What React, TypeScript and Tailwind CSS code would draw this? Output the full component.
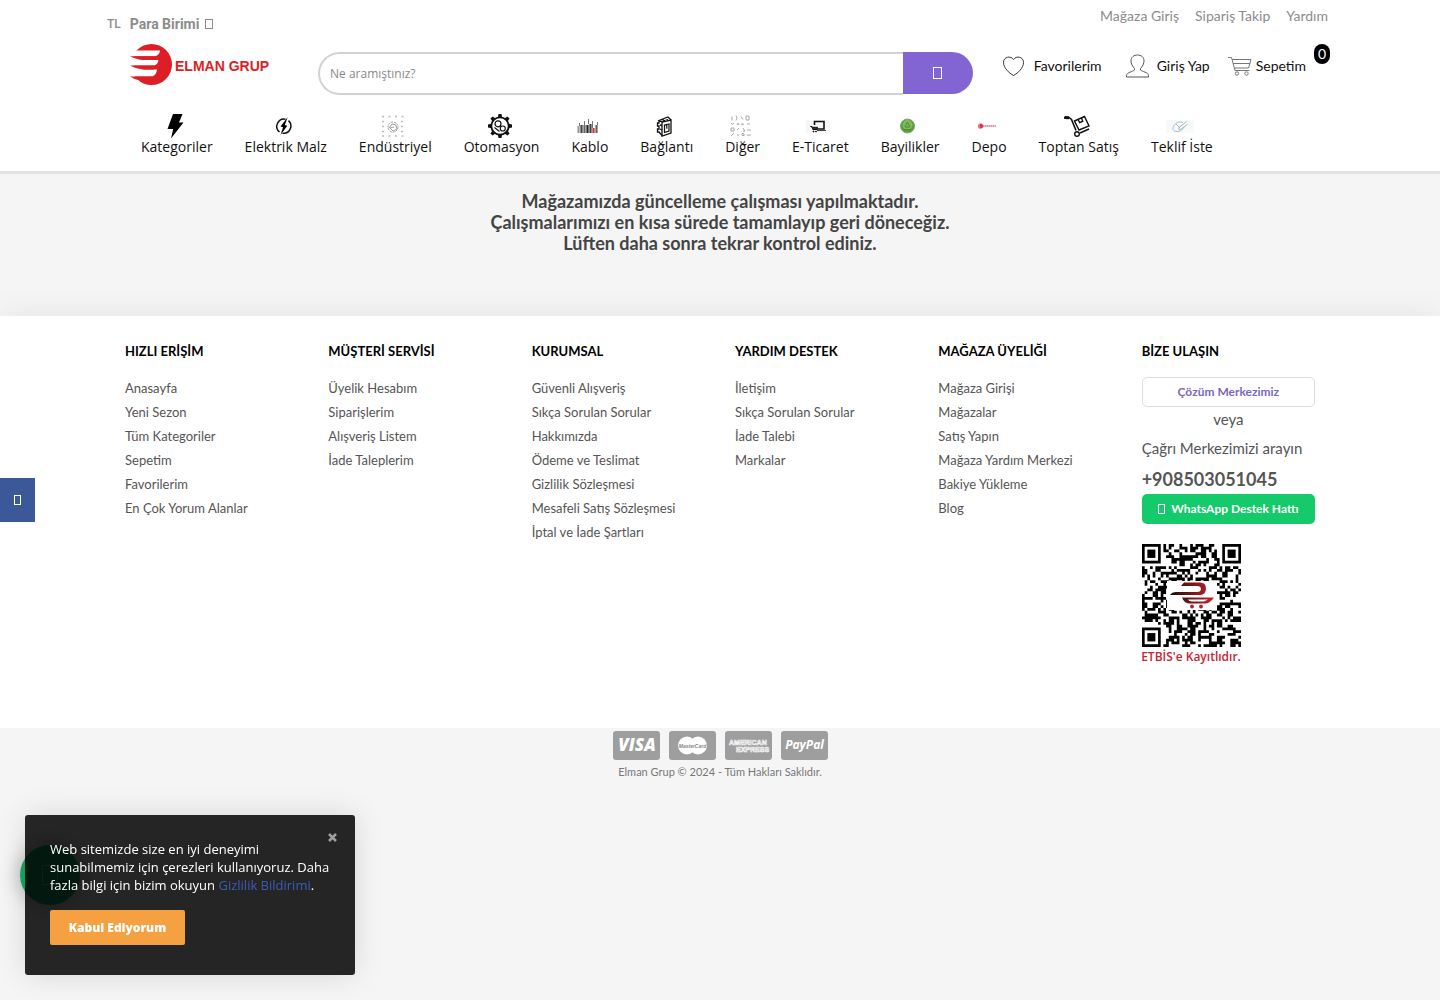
import type { ReactNode } from "react";

const columns = [
  {
    title: "HIZLI ERİŞİM",
    links: ["Anasayfa", "Yeni Sezon", "Tüm Kategoriler", "Sepetim", "Favorilerim", "En Çok Yorum Alanlar"],
  },
  {
    title: "MÜŞTERİ SERVİSİ",
    links: ["Üyelik Hesabım", "Siparişlerim", "Alışveriş Listem", "İade Taleplerim"],
  },
  {
    title: "KURUMSAL",
    links: [
      "Güvenli Alışveriş",
      "Sıkça Sorulan Sorular",
      "Hakkımızda",
      "Ödeme ve Teslimat",
      "Gizlilik Sözleşmesi",
      "Mesafeli Satış Sözleşmesi",
      "İptal ve İade Şartları",
    ],
  },
  {
    title: "YARDIM DESTEK",
    links: ["İletişim", "Sıkça Sorulan Sorular", "İade Talebi", "Markalar"],
  },
  {
    title: "MAĞAZA ÜYELİĞİ",
    links: ["Mağaza Girişi", "Mağazalar", "Satış Yapın", "Mağaza Yardım Merkezi", "Bakiye Yükleme", "Blog"],
  },
];

function Svg({ children, w = 24 }: { children: ReactNode; w?: number }) {
  return (
    <svg width={w} height={24} viewBox={`0 0 ${w} 24`} fill="none" stroke="#111" aria-hidden="true">
      {children}
    </svg>
  );
}

const toothAngles = [0, 45, 90, 135, 180, 225, 270, 315];

const menu = [
  {
    label: "Kategoriler",
    icon: (
      <Svg>
        <path d="M10 0h9.500l-3.500 8.500h4.500L8 24.500l2.200-9.500H4.500z" fill="#000" stroke="none" />
      </Svg>
    ),
  },
  {
    label: "Elektrik Malz",
    icon: (
      <Svg>
        <path d="M13.500 5.200A7.300 7.300 0 0 0 7.500 18M10.500 19.200A7.300 7.300 0 0 0 16.500 6.600" strokeWidth="1.500" />
        <path d="M15.800 3L8.500 12.500l2.500 .8L8.500 21l6.800-9.200-2.500-.8z" fill="#000" stroke="none" />
      </Svg>
    ),
  },
  {
    label: "Endüstriyel",
    icon: (
      <Svg>
        <g stroke="#bbb" strokeWidth="1.500" strokeDasharray="2 4.500">
          <path d="M1 2.500h22M1 7.500h3M20 7.500h3M1 12.500h3M20 12.500h3M1 17.500h3M20 17.500h3M1 22h22" />
        </g>
        <circle cx="12" cy="13" r="5" stroke="#999" strokeDasharray="2 1" />
        <path d="M8 14l3-4 4 1 1 4-4 2-3-3 4-1" stroke="#888" strokeWidth=".8" />
      </Svg>
    ),
  },
  {
    label: "Otomasyon",
    icon: (
      <Svg>
        {toothAngles.map((a) => (
          <path key={a} d="M9.800 3.500L10.500 0h3l.7 3.500z" fill="#111" stroke="none" transform={`rotate(${a} 12 12)`} />
        ))}
        <circle cx="12" cy="12" r="8.700" strokeWidth="1.800" />
        <circle cx="10" cy="9.800" r="3" strokeWidth="1.200" />
        <circle cx="14.800" cy="14.500" r="2.500" strokeWidth="1.200" />
        <path d="M6.500 13.500l5 4" strokeWidth="1.200" />
      </Svg>
    ),
  },
  {
    label: "Kablo",
    icon: (
      <Svg>
        <g strokeWidth="2.200">
          <path d="M2.500 12v7" stroke="#999" />
          <path d="M5.500 11v8M14.500 10v9" stroke="#444" />
          <path d="M8.500 11v8M20.500 11v8" stroke="#666" />
          <path d="M11.500 11v8" stroke="#223" />
          <path d="M17.500 14v5" stroke="#c33" />
        </g>
        <path d="M3.500 9v3M8.500 7v4M12.500 5v5M16.500 7v7M21.500 8v3" stroke="#777" strokeWidth="1" />
      </Svg>
    ),
  },
  {
    label: "Bağlantı",
    icon: (
      <Svg>
        <path d="M9 8l9-2v13l-9 3z" strokeWidth="1.300" />
        <path d="M11.500 11l4.500-1v7l-4.500 1.500zM13.800 10.800v4" strokeWidth="1.200" />
        <path d="M9 8L6 6.500l9-3.500 3 3M6 6.500V9H4.500v3H6v3H4.500v3H6l3 3.500M7 11l2 .5M7 15l2 1M9 5.500l3 1.300M12 4.300l3 1.200" strokeWidth="1.300" />
      </Svg>
    ),
  },
  {
    label: "Diğer",
    icon: (
      <Svg>
        <g stroke="#aaa" strokeWidth="1">
          <path d="M3 2.500v4M7 1.500q2 2 0 5M12 2.500l2 3M17 2h3v4h-3z" />
          <path d="M2 9q1 3 3 0M8 11l1-2 1 2M13 9v2l2-1M18 10h3" />
          <path d="M2 14h3v3H2zM8 16l2-2M14 14l2 3-2 0M18 16h4" />
          <path d="M2 22l3-3M8 21h2M13 19.500h2v2h-2zM18 21h4" />
        </g>
      </Svg>
    ),
  },
  {
    label: "E-Ticaret",
    icon: (
      <Svg>
        <rect x="0" y="6" width="24" height="13" fill="#f6f6f6" stroke="none" />
        <path d="M8.500 11V7.500h9.500V15h-8" strokeWidth="1.600" />
        <path d="M4.500 12.500h1.500l.8 3h4l.8-2.200H6.500z" fill="#333" strokeWidth="1" />
        <path d="M11 16.500h9" stroke="#444" />
        <circle cx="7.500" cy="17.500" r=".5" fill="#111" />
        <circle cx="10" cy="17.500" r=".5" fill="#111" />
      </Svg>
    ),
  },
  {
    label: "Bayilikler",
    icon: (
      <Svg>
        <circle cx="11.500" cy="12" r="7" fill="#5d9a42" stroke="#7fae68" />
        <circle cx="11.500" cy="11" r="4.500" fill="#7dba5c" stroke="#8fc074" strokeWidth=".8" />
        <path d="M9 13l2.500-5 2.500 5zM8 15.500h7" stroke="#4c8535" strokeWidth=".9" />
      </Svg>
    ),
  },
  {
    label: "Depo",
    icon: (
      <Svg>
        <circle cx="5.500" cy="12" r="2.600" fill="#dd3450" stroke="none" />
        <path d="M2 11h3M2 13h3" stroke="#fff" strokeWidth=".6" />
        <path d="M8 12h13" stroke="#dd7085" strokeWidth="1.300" strokeDasharray="1.500 .4" />
      </Svg>
    ),
  },
  {
    label: "Toptan Satış",
    icon: (
      <Svg w={28}>
        <path d="M1 4l5-.5 2.500 2 4.500 11" strokeWidth="1.600" />
        <path d="M1.500 3.500l4.500.3" strokeWidth="3" />
        <circle cx="14" cy="20" r="2.300" strokeWidth="1.400" />
        <path d="M17 19l9-4M11.500 7l10-4.500L26 12l-10 4zM15 5.500l1.700 3 3-1.200-1.200-3.300" strokeWidth="1.400" />
      </Svg>
    ),
  },
  {
    label: "Teklif İste",
    icon: (
      <Svg w={28}>
        <rect x="0" y="6" width="28" height="13" fill="#f8fafa" stroke="none" />
        <path d="M17 8.500q-6-2-9 3t2 6q5 1 8-4" stroke="#adc1cb" />
        <path d="M10 10l4 4M20.500 7.500l-8 6.500 1 2 8-5.500" stroke="#8ca5b1" strokeWidth=".8" />
      </Svg>
    ),
  },
];

// Outline box shown where the icon font has no glyph
function Glyph({ className }: { className: string }) {
  return <span aria-hidden="true" className={`inline-block border border-current ${className}`} />;
}

function Logo() {
  return (
    <svg width="142" height="43" viewBox="0 0 142 43" role="img" aria-label="Elman Grup">
      <circle cx="22.500" cy="20.500" r="20.500" fill="#dc1f26" />
      <g fill="#fff">
        <path d="M0 6.500H31Q30.500 11 26 12.200H0z" />
        <path d="M0 12h4l10 4H29.500Q29 20.500 25 21.500H0z" />
        <path d="M0 21h4l10 4.500H28Q27.500 31 23 32.500H0z" />
      </g>
      <g fill="#dc1f26">
        <path d="M1 12.200H26V16H15Q7 15.500 1 12.200z" />
        <path d="M1 21.500H25V25.500H15Q7 25 1 21.500z" />
        <path d="M1 32.500H23V36H9Q5 35 1 32.500z" />
      </g>
      <text x="46" y="27" fill="#dc1f26" className="font-['Liberation_Sans'] text-[14px] font-bold">
        ELMAN GRUP
      </text>
    </svg>
  );
}

const QR = 37;

function inFinder(x: number, y: number) {
  return (x < 8 && y < 8) || (x > QR - 9 && y < 8) || (x < 8 && y > QR - 9);
}

function qrPath() {
  let d = "";
  let seed = 90850;
  for (let y = 0; y < QR; y++) {
    for (let x = 0; x < QR; x++) {
      seed = (seed * 1103515245 + 12345) % 2147483648;
      if (!inFinder(x, y) && seed / 2147483648 > 0.48) d += `M${x} ${y}h1v1h-1z`;
    }
  }
  return d;
}

const finders = [
  [0, 0],
  [QR - 7, 0],
  [0, QR - 7],
];

function QrCode() {
  return (
    <svg width="99" height="120" viewBox="0 0 99 120" role="img" aria-label="ETBİS'e Kayıtlıdır.">
      <svg width="99" height="103" viewBox={`0 0 ${QR} ${QR}`} preserveAspectRatio="none">
        <path d={qrPath()} />
        {finders.map(([x, y]) => (
          <g key={`${x}-${y}`}>
            <rect x={x + 0.5} y={y + 0.5} width="6" height="6" fill="none" stroke="#000" />
            <rect x={x + 2} y={y + 2} width="3" height="3" />
          </g>
        ))}
      </svg>
      <rect x="25" y="37" width="50" height="29" fill="#fff" />
      <defs>
        <linearGradient id="etbis" gradientUnits="userSpaceOnUse" x1="28" y1="0" x2="72" y2="0">
          <stop offset="0" stopColor="#1b0d0e" />
          <stop offset="1" stopColor="#cf2027" />
        </linearGradient>
      </defs>
      <path d="M42 38.500h16q6 0 6 6t-6 6.500H28q2-3 6-3h21q4 0 4-3t-4-3H39z" fill="url(#etbis)" />
      <path d="M40 53.500h32q-4 6-9 6H48q-6 0-8-6zM46 55.500q1 2 4 2h12l4-2z" fill="url(#etbis)" fillRule="evenodd" />
      <circle cx="50" cy="62.500" r="1.900" fill="#b31f26" />
      <circle cx="59" cy="62.500" r="1.900" fill="#b31f26" />
      <text x="49" y="117" textAnchor="middle" fill="#c8242f" className="font-['Open_Sans'] text-[12px] font-semibold">
        ETBİS'e Kayıtlıdır.
      </text>
    </svg>
  );
}

function Card({ label, children }: { label: string; children: ReactNode }) {
  return (
    <svg width="47" height="29" viewBox="0 0 47 29" role="img" aria-label={label}>
      <rect width="47" height="29" rx="3" fill="#9e9e9e" />
      {children}
    </svg>
  );
}

function Header() {
  return (
    <header className="border-b-3 border-[#e3e3e3] bg-white">
      <div className="mx-auto max-w-[1226px]">
        <div className="flex h-11 items-start justify-between">
          <div className="flex items-center gap-[9px] pt-4 font-['Roboto'] leading-4 text-[#8c8c8c]">
            <span className="text-xs font-medium">TL</span>
            <button className="flex items-center gap-[6px] text-sm leading-4 font-bold">
              Para Birimi
              <Glyph className="h-[10px] w-2" />
            </button>
          </div>
          <nav className="flex gap-4 pt-2 pr-[5px] text-sm leading-4 text-[#8c8c8c]">
            <a href="#">Mağaza Giriş</a>
            <a href="#">Sipariş Takip</a>
            <a href="#">Yardım</a>
          </nav>
        </div>

        <div className="flex items-start pr-[3px] pl-[22px]">
          <a href="#" className="shrink-0">
            <Logo />
          </a>
          <form className="mt-2 ml-[47px] flex flex-1" onSubmit={(e) => e.preventDefault()}>
            <input
              type="text"
              aria-label="Ara"
              placeholder="Ne aramıştınız?"
              className="h-[43px] min-w-0 flex-1 rounded-l-full border-2 border-r-0 border-[#d2d2d2] px-[10px] font-['Open_Sans'] text-xs outline-none placeholder:text-[#8a8a8a]"
            />
            <button aria-label="Ara" className="flex h-[42px] w-[70px] items-center justify-center rounded-r-full bg-[#8265d2] text-white">
              <Glyph className="h-3 w-[9px] border-[1.5px]" />
            </button>
          </form>
          <div className="ml-[30px] flex h-11 items-center text-sm text-[#111]">
            <a href="#" className="flex items-center gap-[10px]">
              <svg width="21" height="22" viewBox="0 0 21 22" fill="none" stroke="#333" aria-hidden="true">
                <path d="M10.500 20.500C6 18 .5 13 .5 7.500.5 1.500 8 .5 10.500 4.500 13 .5 20.500 1.500 20.500 7.500 20.500 13 15 18 10.500 20.500z" />
              </svg>
              Favorilerim
            </a>
            <a href="#" className="ml-6 flex items-center gap-2">
              <svg width="23" height="24" viewBox="0 0 23 24" fill="none" stroke="#555" aria-hidden="true">
                <path d="M8.500 14.500C6.500 12.500 5 9.500 5 7c0-4 3-6 6.500-6S18 3 18 7c0 2.500-1.500 5.500-3.500 7.500v1.500c1.500 1.500 8 2.500 8 5.500v1.500H.5v-1.500c0-3 6.500-4 8-5.500z" />
              </svg>
              Giriş Yap
            </a>
            <a href="#" className="ml-[18px] flex items-center gap-1">
              <svg width="24" height="20" viewBox="0 0 24 20" fill="none" stroke="#777" aria-hidden="true">
                <path d="M0 1.500h3.500L7 14.500h14.500M4 3.500h19L20.500 12H6.500M5 7.500h17" />
                <circle cx="9" cy="17.500" r="1.700" />
                <circle cx="18.500" cy="17.500" r="1.700" />
              </svg>
              Sepetim
            </a>
            <span className="mb-6 ml-2 flex h-5 w-4 items-center justify-center rounded-full bg-black text-sm leading-5 text-white">0</span>
          </div>
        </div>

        <nav className="flex gap-8 pt-[19px] pb-[15px] pl-[34px] font-['Open_Sans'] text-sm leading-[18px] text-[#111]">
          {menu.map((m) => (
            <a key={m.label} href="#" className="flex flex-col items-center whitespace-nowrap">
              <span className="pr-1">{m.icon}</span>
              {m.label}
            </a>
          ))}
        </nav>
      </div>
    </header>
  );
}

function Footer() {
  return (
    <footer>
      <div className="bg-white shadow-[0_0_30px_rgba(0,0,0,0.08)]">
        <div className="mx-auto grid max-w-[1220px] grid-cols-6 pt-[23px] pb-16">
          {columns.map((c) => (
            <div key={c.title} className="px-[15px]">
              <h3 className="mb-[13px] text-[13px] leading-6 font-bold whitespace-nowrap text-black">{c.title}</h3>
              <ul className="text-[13px] leading-6 whitespace-nowrap text-[#555]">
                {c.links.map((l) => (
                  <li key={l}>
                    <a href="#">{l}</a>
                  </li>
                ))}
              </ul>
            </div>
          ))}
          <div className="px-[15px] text-[#555]">
            <h3 className="mb-[14px] text-[13px] leading-6 font-bold text-black">BİZE ULAŞIN</h3>
            <a href="#" className="block h-[30px] rounded-[5px] border border-[#ddd] text-center text-xs leading-7 font-bold text-[#7a68bd]">
              Çözüm Merkezimiz
            </a>
            <p className="text-center text-[15px] leading-6">veya</p>
            <p className="mt-[5px] text-[15px] leading-6 whitespace-nowrap">Çağrı Merkezimizi arayın</p>
            <p className="mt-1 text-lg leading-[30px] font-bold">+908503051045</p>
            <a href="#" className="flex h-[30px] items-center justify-center gap-[6px] rounded-[5px] bg-[#14ca6a] text-xs font-bold whitespace-nowrap text-white">
              <Glyph className="h-[10px] w-[7px]" />
              WhatsApp Destek Hattı
            </a>
            <div className="mt-5">
              <QrCode />
            </div>
          </div>
        </div>
      </div>

      <div className="relative bg-[#f5f5f5] pt-[3px] pb-10 text-center">
        <div className="flex justify-center gap-[9px]">
          <Card label="Visa">
            <text x="24" y="20" textAnchor="middle" fill="#fff" className="font-['Open_Sans'] text-[17px] font-extrabold italic">
              VISA
            </text>
          </Card>
          <Card label="MasterCard">
            <circle cx="18" cy="14.500" r="9" fill="#fff" />
            <circle cx="29" cy="14.500" r="9" fill="#fff" />
            <text x="23.500" y="17" textAnchor="middle" fill="#888" className="font-['Liberation_Sans'] text-[5px] font-bold italic">
              MasterCard
            </text>
          </Card>
          <Card label="American Express">
            <g fill="#9e9e9e" stroke="#f3f3f3" strokeWidth=".7" className="font-['Liberation_Sans'] text-[7px] font-bold">
              <text x="4" y="14">AMERICAN</text>
              <text x="11" y="21">EXPRESS</text>
            </g>
          </Card>
          <Card label="PayPal">
            <text x="23.500" y="18" textAnchor="middle" fill="#fff" className="font-['Open_Sans'] text-[12px] font-bold italic">
              PayPal
            </text>
          </Card>
        </div>
        <p className="mt-1 text-[11px] leading-4 text-[#777]">Elman Grup © 2024 - Tüm Hakları Saklıdır.</p>
      </div>
    </footer>
  );
}

function CookieBanner() {
  return (
    <div className="fixed bottom-[25px] left-[25px] w-[330px] rounded-[3px] bg-black/85 p-[25px] pb-[30px] font-['Open_Sans'] text-[13px] leading-[18px] font-medium text-white shadow-[0_0_30px_rgba(0,0,0,0.12)]">
      <button aria-label="Kapat" className="absolute top-[18px] right-[18px] text-[#a0a0a0]">
        <svg width="9" height="9" viewBox="0 0 9 9" stroke="currentColor" strokeWidth="2.500" aria-hidden="true">
          <path d="M1 1l7 7M8 1L1 8" />
        </svg>
      </button>
      <p className="-mr-1">
        Web sitemizde size en iyi deneyimi sunabilmemiz için çerezleri kullanıyoruz. Daha fazla bilgi için bizim okuyun{" "}
        <a href="#" className="font-normal text-[#3c5bb5]">
          Gizlilik Bildirimi
        </a>
        .
      </p>
      <button className="mt-4 h-[35px] w-[135px] rounded-[2px] bg-[#f5a142] text-xs font-extrabold">Kabul Ediyorum</button>
    </div>
  );
}

export default function App() {
  return (
    <div className="min-h-screen bg-[#f5f5f5] font-['Lato',sans-serif]">
      <Header />
      <main className="px-4 pt-[17px] pb-[62px] text-center text-lg leading-[21px] font-bold text-[#444]">
        <p>Mağazamızda güncelleme çalışması yapılmaktadır.</p>
        <p>Çalışmalarımızı en kısa sürede tamamlayıp geri döneceğiz.</p>
        <p>Lüften daha sonra tekrar kontrol ediniz.</p>
      </main>
      <Footer />

      <a href="#" aria-label="Facebook" className="fixed top-1/2 left-0 flex h-11 w-[35px] -translate-y-1/2 items-center justify-center bg-[#3b5998] text-white">
        <Glyph className="h-[10px] w-[7px]" />
      </a>
      <a href="#" aria-label="WhatsApp" className="fixed bottom-[95px] left-5 flex size-[60px] items-center justify-center rounded-full bg-[#14a866] text-white/40 shadow-[0_0_20px_rgba(0,0,0,0.3)]">
        <Glyph className="h-5 w-4" />
      </a>
      <CookieBanner />
    </div>
  );
}
